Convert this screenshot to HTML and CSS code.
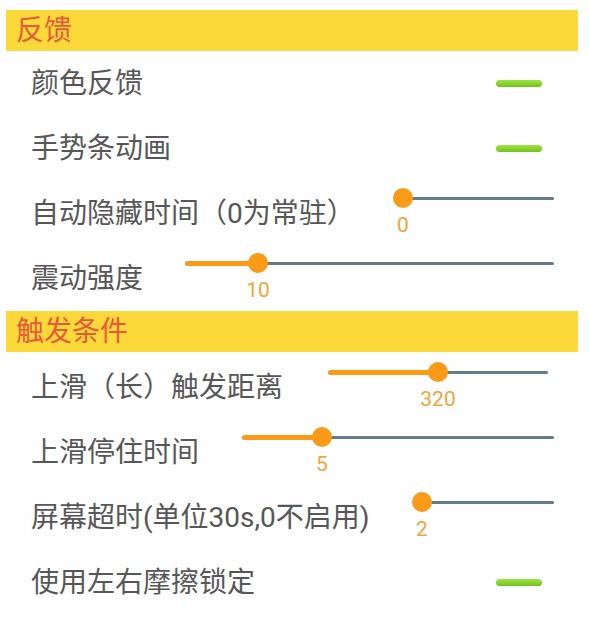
FILE: index.html
```html
<!DOCTYPE html>
<html lang="zh-CN">
<head>
<meta charset="utf-8">
<title>设置</title>
<link rel="stylesheet" href="styles.css">
</head>
<body>
<div class="screen">
  <section class="group">
    <h2 class="group-title">反馈</h2>
    <div class="pref">
      <span class="pref-title">颜色反馈</span>
      <span class="switch"></span>
    </div>
    <div class="pref">
      <span class="pref-title">手势条动画</span>
      <span class="switch"></span>
    </div>
    <div class="pref">
      <span class="pref-title">自动隐藏时间（0为常驻）</span>
      <div class="seek seek--autohide">
        <div class="seek-track">
          <div class="seek-rail"></div>
          <div class="seek-fill" style="width:0%"></div>
          <div class="seek-thumb" style="left:0%"></div>
        </div>
        <div class="seek-values"><span class="seek-value" style="left:0%">0</span></div>
      </div>
    </div>
    <div class="pref">
      <span class="pref-title">震动强度</span>
      <div class="seek seek--vibrate">
        <div class="seek-track">
          <div class="seek-rail"></div>
          <div class="seek-fill" style="width:19.8%"></div>
          <div class="seek-thumb" style="left:19.8%"></div>
        </div>
        <div class="seek-values"><span class="seek-value" style="left:19.8%">10</span></div>
      </div>
    </div>
  </section>
  <section class="group group--trigger">
    <h2 class="group-title">触发条件</h2>
    <div class="pref">
      <span class="pref-title">上滑（长）触发距离</span>
      <div class="seek seek--distance">
        <div class="seek-track">
          <div class="seek-rail"></div>
          <div class="seek-fill" style="width:50%"></div>
          <div class="seek-thumb" style="left:50%"></div>
        </div>
        <div class="seek-values"><span class="seek-value" style="left:50%">320</span></div>
      </div>
    </div>
    <div class="pref">
      <span class="pref-title">上滑停住时间</span>
      <div class="seek seek--hold">
        <div class="seek-track">
          <div class="seek-rail"></div>
          <div class="seek-fill" style="width:25.6%"></div>
          <div class="seek-thumb" style="left:25.6%"></div>
        </div>
        <div class="seek-values"><span class="seek-value" style="left:25.6%">5</span></div>
      </div>
    </div>
    <div class="pref">
      <span class="pref-title">屏幕超时(单位30s,0不启用)</span>
      <div class="seek seek--timeout">
        <div class="seek-track">
          <div class="seek-rail"></div>
          <div class="seek-fill" style="width:0%"></div>
          <div class="seek-thumb" style="left:0%"></div>
        </div>
        <div class="seek-values"><span class="seek-value" style="left:0%">2</span></div>
      </div>
    </div>
    <div class="pref">
      <span class="pref-title">使用左右摩擦锁定</span>
      <span class="switch"></span>
    </div>
  </section>
</div>
</body>
</html>
```
FILE: styles.css
```css
html, body {
  margin: 0;
  padding: 0;
  background: #fefefe;
}

body {
  font-family: "Roboto", "Noto Sans CJK SC", sans-serif;
}

.screen {
  padding: 10px 11px 0 6px;
}

.group-title {
  margin: 0;
  height: 41px;
  line-height: 41px;
  padding-left: 10px;
  background: #fcd93a;
  color: #e9593a;
  font-size: 28px;
  font-weight: normal;
}

.group--trigger .group-title {
  margin-bottom: 3px;
}

.pref {
  display: flex;
  align-items: center;
  justify-content: space-between;
  height: 65px;
  padding: 0 24px 0 25px;
}

.pref-title {
  font-size: 28px;
  line-height: 1;
  color: #575757;
  white-space: nowrap;
}

.switch {
  width: 46px;
  height: 7px;
  margin-right: 12px;
  border-radius: 4px;
  background: linear-gradient(#a2e344, #6ec41b);
}

.seek {
  align-self: flex-start;
  display: flex;
  flex-direction: column;
}

.seek--autohide { width: 151px; }
.seek--vibrate { width: 369px; }
.seek--distance { width: 220px; margin-right: 6px; }
.seek--hold { width: 312px; }
.seek--timeout { width: 132px; }

.seek-track {
  position: relative;
  height: 20px;
  margin-top: 7px;
  display: flex;
  align-items: center;
}

.seek-rail {
  flex: 1;
  height: 3px;
  border-radius: 2px;
  background: #637d89;
}

.seek-fill {
  position: absolute;
  left: 0;
  top: 7.5px;
  height: 5px;
  border-radius: 3px;
  background: #fb9a16;
}

.seek-thumb {
  position: absolute;
  top: 0;
  width: 20px;
  height: 20px;
  margin-left: -10px;
  border-radius: 50%;
  background: #fb9a16;
}

.seek-values {
  position: relative;
  height: 20px;
  margin-top: 7px;
}

.seek-value {
  position: absolute;
  top: 0;
  transform: translateX(-50%);
  font-family: "Roboto", sans-serif;
  font-size: 21px;
  line-height: 20px;
  color: #f2a53a;
}
```
